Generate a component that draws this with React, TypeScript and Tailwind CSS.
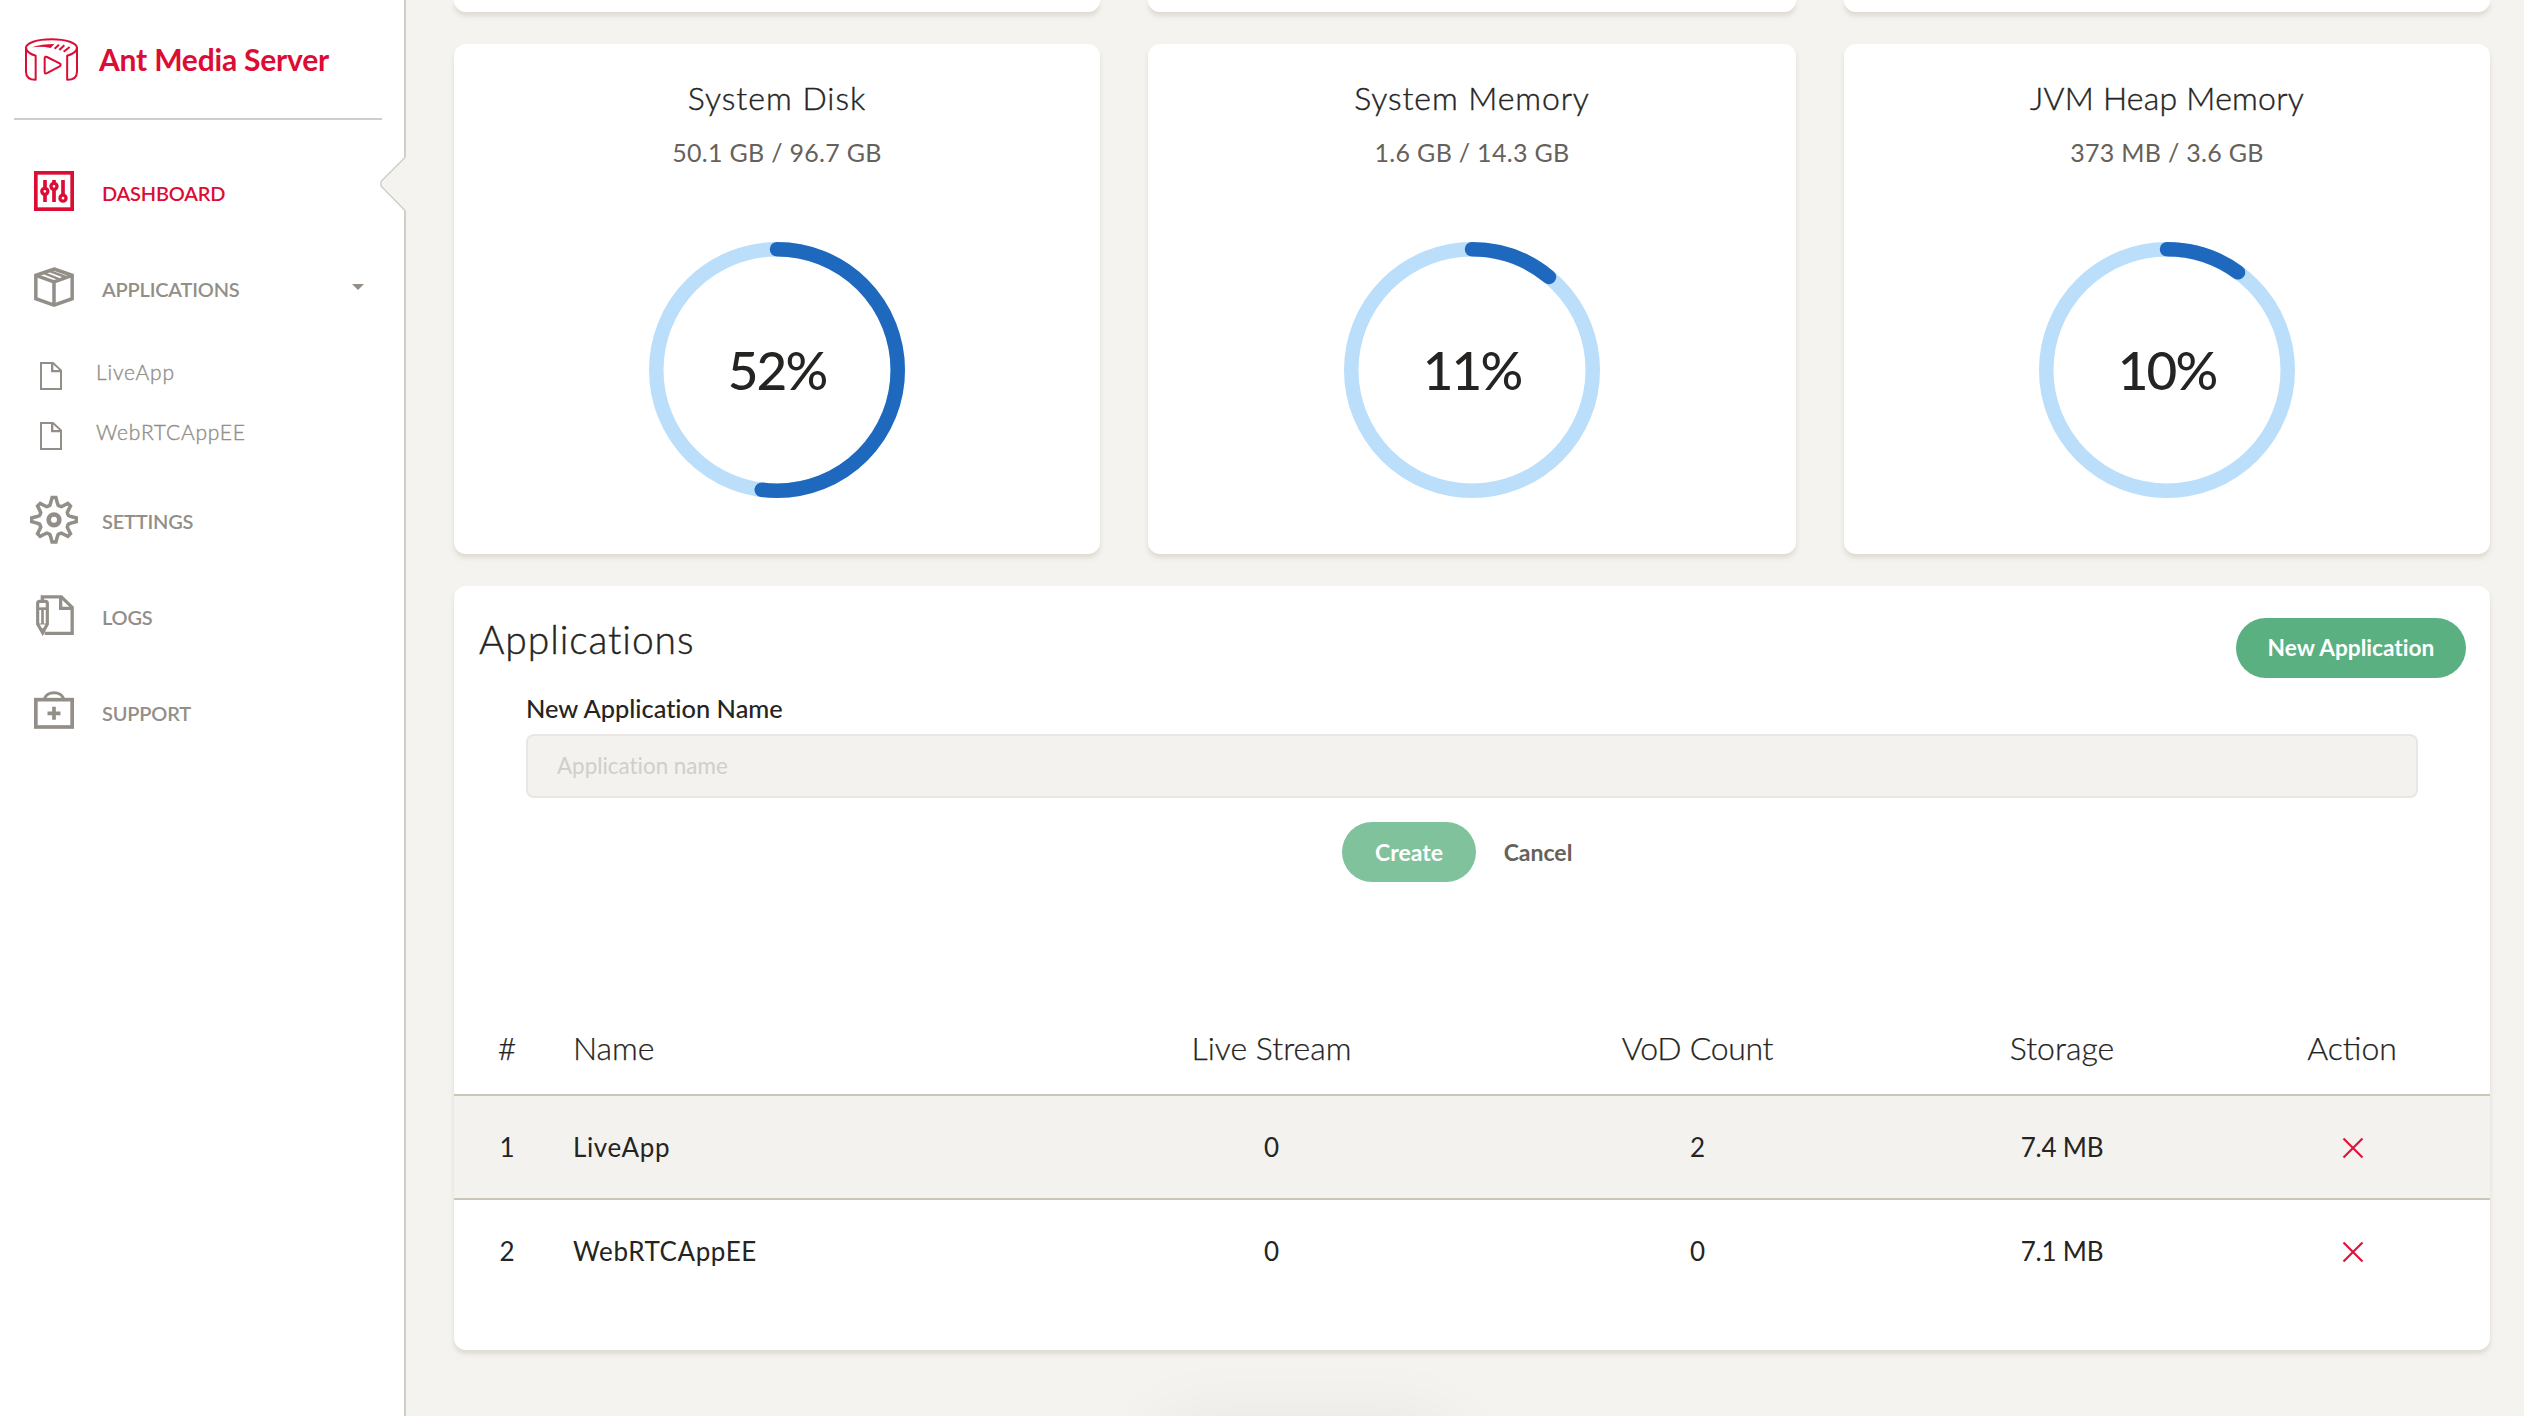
import React from "react";

type IconProps = { className?: string };

function Logo() {
  return (
    <svg viewBox="66 102 180 144" width="60" height="48" fill="none" stroke="#dc0d35" strokeWidth="6" strokeLinejoin="round" strokeLinecap="round">
      <path d="M78 141C78 126 110 115 154.500 115C199 115 231 126 231 141" />
      <path d="M78 141V212Q78 236 107 236.500V164Q80 156 78 141Z" />
      <path d="M231 141V212Q231 236 201.500 236.500V164Q229 156 231 141Z" />
      <path d="M134 173Q134 165 141 168L179 187Q185 191.500 179 196L141 216.500Q134 220 134 212Z" />
      <path d="M96 139Q125 129 163 129L152 141Q125 135 96 139Z" fill="#dc0d35" stroke="none" />
      <path d="M164 143L177 131M178 147L193 133M191 152L209 138" strokeWidth="6" strokeLinecap="butt" />
    </svg>
  );
}

function DashboardIcon() {
  return (
    <svg viewBox="72 483 180 180" width="60" height="60" fill="none" stroke="currentColor">
      <rect x="107.500" y="518.500" width="109" height="109" strokeWidth="11" />
      <path d="M135 540V606M162 540V606M189 540V600" strokeWidth="11" />
      <circle cx="134.500" cy="574" r="9" strokeWidth="10" fill="#fff" />
      <circle cx="162" cy="559" r="9" strokeWidth="10" fill="#fff" />
      <circle cx="189" cy="594.500" r="9" strokeWidth="10" fill="#fff" />
    </svg>
  );
}

function PackageIcon() {
  return (
    <svg viewBox="72 51 180 180" width="60" height="60" fill="none" stroke="currentColor" strokeWidth="10.500">
      <path d="M162 87L216.500 106V176L162 195.500L107.500 176V106Z" />
      <path d="M107.500 106L162 126L216.500 106M162 126V195" />
      <path d="M128 98L179 118M145 92L197 111" strokeWidth="7.500" />
    </svg>
  );
}

function FileIcon() {
  return (
    <svg viewBox="72 306 180 180" width="60" height="60" fill="none" stroke="currentColor" strokeWidth="6">
      <path d="M123 369H159L183 391V447H123Z" />
      <path d="M156.500 369V393.500H184" strokeWidth="7" />
    </svg>
  );
}

function SettingsIcon() {
  const points: string[] = [];
  const cx = 162;
  const cy = 119.5;
  const add = (deg: number, r: number) => {
    const a = (deg * Math.PI) / 180;
    points.push(`${(cx + r * Math.sin(a)).toFixed(1)},${(cy - r * Math.cos(a)).toFixed(1)}`);
  };
  for (let i = 0; i < 8; i++) {
    const d = i * 45;
    const tip = i % 2 ? 64.5 : 67;
    add(d - 11, 52);
    add(d - 5, tip);
    add(d + 5, tip);
    add(d + 11, 52);
    add(d + 16, 45.5);
    add(d + 22.5, 44.5);
    add(d + 29, 45.5);
  }
  return (
    <svg viewBox="72 27 180 180" width="60" height="60" fill="none" stroke="currentColor">
      <polygon points={points.join(" ")} strokeWidth="10.500" />
      <circle cx={cx} cy={cy} r="16" strokeWidth="14" />
    </svg>
  );
}

function LogsIcon() {
  return (
    <svg viewBox="72 315 180 180" width="60" height="60" fill="none" stroke="currentColor" strokeWidth="10">
      <path d="M127 362V350.500H184L216.500 382V460H134" />
      <path d="M182 350V385H217" />
      <path d="M113 432V370Q113 364 119 364H136Q142 364 142 370V432L128 458Z" strokeWidth="9.500" />
      <path d="M112 386H143" strokeWidth="8" />
      <path d="M127.500 386V432" strokeWidth="8" />
      <path d="M113 432H142" strokeWidth="3" />
      <path d="M120 445H136L128 468Z" fill="currentColor" stroke="none" />
    </svg>
  );
}

function SupportIcon() {
  return (
    <svg viewBox="72 603 180 180" width="60" height="60" fill="none" stroke="currentColor">
      <rect x="107.500" y="659" width="109" height="82" strokeWidth="11" />
      <path d="M133 657C140 632 184 632 191 657" strokeWidth="9.500" />
      <path d="M142.500 700H181.500M162 680.500V719.500" strokeWidth="11" />
    </svg>
  );
}

function CloseIcon({ className }: IconProps) {
  return (
    <svg viewBox="0 0 22 22" width="22" height="22" className={className} fill="none" stroke="#e0133a" strokeWidth="2.200">
      <path d="M1.500 1.500L20.500 20.500M20.500 1.500L1.500 20.500" />
    </svg>
  );
}

function NavItem({ icon, label, active, caret }: { icon: React.ReactNode; label: string; active?: boolean; caret?: boolean }) {
  return (
    <a className={`flex h-24 items-center pl-6 pr-10 ${active ? "text-[#dc0d35]" : "text-[#938f88]"}`}>
      {icon}
      <span className="ml-[18px] pt-[3px] text-[20px] leading-6 font-semibold tracking-[-0.2px]">{label}</span>
      {caret && <span className="ml-auto border-x-[6px] border-t-[6px] border-x-transparent border-t-[#938f88]" />}
    </a>
  );
}

function SubItem({ label }: { label: string }) {
  return (
    <a className="flex h-15 items-center pl-6 text-[#938f88]">
      <FileIcon />
      <span className="ml-[12px] text-[21px] leading-6 font-light tracking-[0.8px] [-webkit-text-stroke:0.4px]">{label}</span>
    </a>
  );
}

function Sidebar() {
  return (
    <aside className="relative h-full w-[406px] shrink-0 border-r-2 border-[#cfcfca] bg-white">
      <div className="flex h-[118px] items-center pl-[22px] text-[#dc0d35]">
        <Logo />
        <span className="ml-[17px] text-[30px] leading-9 font-bold tracking-[-0.2px]">Ant Media Server</span>
      </div>
      <div className="mr-[22px] ml-[14px] h-0.5 bg-[#cfcfca]" />
      <nav className="pt-[23px]">
        <NavItem icon={<DashboardIcon />} label="DASHBOARD" active />
        <NavItem icon={<PackageIcon />} label="APPLICATIONS" caret />
        <div className="mt-[7px] mb-[9px]">
          <SubItem label="LiveApp" />
          <SubItem label="WebRTCAppEE" />
        </div>
        <NavItem icon={<SettingsIcon />} label="SETTINGS" />
        <NavItem icon={<LogsIcon />} label="LOGS" />
        <NavItem icon={<SupportIcon />} label="SUPPORT" />
      </nav>
      <svg className="absolute top-[156px] -right-0.5" width="26" height="56" viewBox="0 0 26 56">
        <path d="M26 0V56L25 54L1 30V26L25 2Z" fill="#f4f3ef" />
        <path d="M25 1.500L1 25.500V30L25 54.500" fill="none" stroke="#cfcfca" strokeWidth="1.500" />
      </svg>
    </aside>
  );
}

const cardStyle = "rounded-xl bg-white shadow-[0_4px_4px_rgba(204,197,185,0.5)]";

function Gauge({ percent }: { percent: number }) {
  const r = 120.75;
  const length = 2 * Math.PI * r;
  return (
    <div className="grid size-64 place-items-center">
      <svg viewBox="0 0 256 256" className="col-start-1 row-start-1 size-64 -rotate-90" fill="none" strokeWidth="14.500">
        <circle cx="128" cy="128" r={r} stroke="#bbdefb" />
        <circle cx="128" cy="128" r={r} stroke="#1e68be" strokeLinecap="round" strokeDasharray={`${(length * percent) / 100} ${length}`} />
      </svg>
      <span className="col-start-1 row-start-1 text-[53px] leading-[60px] font-medium tracking-[-1.9px] text-[#252422]">{percent}%</span>
    </div>
  );
}

function StatCard({ title, detail, percent, titleTracking }: { title: string; detail: string; percent: number; titleTracking: string }) {
  return (
    <section className={`flex h-[510px] flex-col items-center pt-[34px] ${cardStyle}`}>
      <h4 className={`text-[32px] leading-10 font-light text-[#252422] [-webkit-text-stroke:0.4px] ${titleTracking}`}>{title}</h4>
      <p className="mt-[18px] mb-[74px] text-[25px] leading-8 tracking-[0.3px] text-[#66615b]">{detail}</p>
      <Gauge percent={percent} />
    </section>
  );
}

const statColumns = "grid grid-cols-[646px_648px_646px] gap-12";

const columns = "grid grid-cols-[106px_498px_427px_425px_304px_276px] items-center text-center";

const rows = [
  { id: 1, name: "LiveApp", live: 0, vod: 2, storage: "7.4 MB" },
  { id: 2, name: "WebRTCAppEE", live: 0, vod: 0, storage: "7.1 MB" },
];

function ApplicationsCard() {
  return (
    <section className={`mt-8 h-[764px] text-[#252422] ${cardStyle}`}>
      <div className="flex h-[106px] items-start justify-between pr-6 pl-[25px]">
        <h3 className="pt-[29px] text-[39px] leading-12 font-light tracking-[0.9px] [-webkit-text-stroke:0.4px]">Applications</h3>
        <button className="mt-8 h-15 w-[230px] rounded-full bg-[#5ab081] text-[22.7px] font-bold text-white [font-variant-ligatures:none]">New Application</button>
      </div>
      <div className="px-18">
        <label className="block h-[42px] text-[25.4px] leading-8 font-medium [font-variant-ligatures:none]">New Application Name</label>
        <input
          className="block h-16 w-full rounded-lg border-2 border-[#e8e7e3] bg-[#f3f2ee] pb-0.5 pl-[29px] text-[22.4px] [font-variant-ligatures:none] placeholder:text-[#cfcfca]"
          placeholder="Application name"
        />
      </div>
      <div className="flex justify-center pt-6 pb-30 text-[23px] font-bold">
        <button className="h-15 w-[134px] rounded-full bg-[#7fc29c] text-white">Create</button>
        <button className="h-15 w-[126px] pr-0.5 text-[#66615b]">Cancel</button>
      </div>
      <div className={`h-[94px] border-b-2 border-[#ccc5b9] text-[32px] leading-10 font-light [-webkit-text-stroke:0.25px] ${columns}`}>
        <span>#</span>
        <span className="pl-[13px] text-left">Name</span>
        <span>Live Stream</span>
        <span className="tracking-[-0.3px]">VoD Count</span>
        <span>Storage</span>
        <span>Action</span>
      </div>
      {rows.map((row) => (
        <div
          key={row.id}
          className={`text-[26px] leading-8 ${columns} ${row.id === 1 ? "h-26 border-b-2 border-[#ccc5b9] bg-[#f3f2ee]" : "h-[102px]"}`}
        >
          <span>{row.id}</span>
          <span className="pl-[13px] text-left tracking-[0.6px]">{row.name}</span>
          <span>{row.live}</span>
          <span>{row.vod}</span>
          <span className="tracking-[-0.2px]">{row.storage}</span>
          <CloseIcon className="mt-0.5 ml-0.5 justify-self-center" />
        </div>
      ))}
    </section>
  );
}

export default function App() {
  return (
    <div className="relative flex h-[1416px] w-[2524px] overflow-hidden bg-[#f4f3ef] font-['Lato',sans-serif]">
      <Sidebar />
      <main className="flex-1 pr-[34px] pl-12">
        <div className={statColumns}>
          <div className="h-3 rounded-b-xl bg-white shadow-[0_4px_4px_rgba(204,197,185,0.5)]" />
          <div className="h-3 rounded-b-xl bg-white shadow-[0_4px_4px_rgba(204,197,185,0.5)]" />
          <div className="h-3 rounded-b-xl bg-white shadow-[0_4px_4px_rgba(204,197,185,0.5)]" />
        </div>
        <div className={`mt-8 ${statColumns}`}>
          <StatCard title="System Disk" detail="50.1 GB / 96.7 GB" percent={52} titleTracking="tracking-[1px]" />
          <StatCard title="System Memory" detail="1.6 GB / 14.3 GB" percent={11} titleTracking="tracking-[0.9px]" />
          <StatCard title="JVM Heap Memory" detail="373 MB / 3.6 GB" percent={10} titleTracking="tracking-[0.25px]" />
        </div>
        <ApplicationsCard />
      </main>
      <div className="absolute top-[1428px] left-[1160px] h-20 w-[290px] rounded-2xl shadow-[0_0_80px_rgba(0,0,0,0.07)]" />
    </div>
  );
}
